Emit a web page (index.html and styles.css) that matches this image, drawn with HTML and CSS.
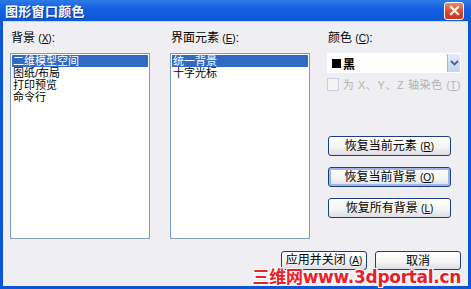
FILE: index.html
```html
<!DOCTYPE html>
<html lang="zh">

<head>
    <meta charset="UTF-8">
    <title>图形窗口颜色</title>
    <link rel="stylesheet" href="styles.css">
</head>

<body>
    <div class="win">
        <div class="titlebar">
            <span class="title">图形窗口颜色</span>
            <span class="close">
                <svg width="11" height="11" viewBox="0 0 11 11">
                    <path d="M2 2 L9 9 M9 2 L2 9" stroke="#fff" stroke-width="2.2" stroke-linecap="square" />
                </svg>
            </span>
        </div>
        <div class="body">
            <div class="cols">
                <div class="col list_col">
                    <div class="label">背景 <span class="key">(<u>X</u>)</span>:</div>
                    <div class="list">
                        <div class="item sel">二维模型空间</div>
                        <div class="item">图纸/布局</div>
                        <div class="item">打印预览</div>
                        <div class="item">命令行</div>
                    </div>
                </div>
                <div class="col list_col">
                    <div class="label">界面元素 <span class="key">(<u>E</u>)</span>:</div>
                    <div class="list">
                        <div class="item sel">统一背景</div>
                        <div class="item">十字光标</div>
                    </div>
                </div>
                <div class="col side">
                    <div class="label">颜色 <span class="key">(<u>C</u>)</span>:</div>
                    <div class="combo">
                        <span class="swatch"></span><span class="combo_text">黑</span>
                        <span class="arrow">
                            <svg width="9" height="6" viewBox="0 0 9 6">
                                <path d="M1 1 L4.5 4.5 L8 1" fill="none" stroke="#4d6185" stroke-width="1.8" />
                            </svg>
                        </span>
                    </div>
                    <div class="check">
                        <span class="box"></span>
                        <span>为 X、Y、Z 轴染色 <span class="key">(<u>T</u>)</span></span>
                    </div>
                    <div class="side_btns">
                        <button type="button" class="btn">恢复当前元素 <span class="key">(<u>R</u>)</span></button>
                        <button type="button" class="btn focus">恢复当前背景 <span class="key">(<u>O</u>)</span></button>
                        <button type="button" class="btn">恢复所有背景 <span class="key">(<u>L</u>)</span></button>
                    </div>
                </div>
            </div>
            <div class="bottom">
                <button type="button" class="btn wide">应用并关闭 <span class="key">(<u>A</u>)</span></button>
                <button type="button" class="btn wide">取消</button>
            </div>
        </div>
        <div class="mark">三维网www.3dportal.cn</div>
    </div>
</body>

</html>
```

FILE: styles.css
```css
* {
    box-sizing: border-box;
}

body {
    margin: 0;
    font-family: "Liberation Sans", "Noto Sans CJK SC", sans-serif;
    font-size: 12px;
    color: #000;
}

.win {
    position: relative;
    width: 471px;
    height: 289px;
    background-color: #0a56d4;
    padding: 0 3px 3px 3px;
    display: flex;
    flex-direction: column;
}

.titlebar {
    height: 21px;
    margin: 0 -3px;
    padding: 0 7px 0 5px;
    display: flex;
    align-items: center;
    justify-content: space-between;
    background: linear-gradient(#2f7ae8, #1560e0 40%, #0b58d8);
}

.title {
    color: #fff;
    font-weight: bold;
    font-size: 13px;
    letter-spacing: 0.3px;
    text-shadow: 1px 1px 0 #0a3a9a;
}

.close {
    width: 20px;
    height: 18px;
    border: 1px solid #fff;
    border-radius: 3px;
    background: linear-gradient(#e88a6e, #d5472b 60%, #c63a20);
    display: flex;
    align-items: center;
    justify-content: center;
}

.body {
    flex: 1;
    background-color: #efeef3;
    border-top: 1px solid #c9d6f0;
    padding: 9px 7px 0 7px;
    display: flex;
    flex-direction: column;
}

.cols {
    display: flex;
}

.col {
    display: flex;
    flex-direction: column;
}

.list_col {
    width: 141px;
    margin-right: 20px;
}

.label {
    height: 14px;
    line-height: 14px;
    margin-bottom: 8px;
    padding-left: 1px;
}

.key {
    font-size: 10px;
}

.list {
    height: 186px;
    background-color: #fff;
    border: 1px solid #7f9db9;
    padding: 1px;
}

.item {
    height: 12px;
    line-height: 12px;
    font-size: 11px;
    padding-left: 1px;
}

.sel {
    background-color: #316ac5;
    color: #fff;
}

.side {
    width: 134px;
    margin-left: -3px;
}

.combo {
    height: 20px;
    background-color: #fff;
    border: 1px solid #fff;
    display: flex;
    align-items: center;
    padding-left: 4px;
}

.swatch {
    width: 9px;
    height: 9px;
    background-color: #000;
    margin-right: 2px;
}

.combo_text {
    flex: 1;
    font-weight: bold;
}

.arrow {
    width: 13px;
    height: 18px;
    background: linear-gradient(#e4ebf9, #c3d3f4);
    border-left: 1px solid #a9b7d6;
    display: flex;
    align-items: center;
    justify-content: center;
}

.check {
    margin-top: 4px;
    display: flex;
    align-items: center;
    color: #b5b3ad;
    font-size: 11px;
    letter-spacing: 0.6px;
    height: 14px;
    white-space: nowrap;
}

.box {
    width: 13px;
    height: 13px;
    border: 1px solid #c8cfe0;
    background-color: #f4f4f4;
    margin-right: 4px;
}

.side_btns {
    margin-top: 45px;
    display: flex;
    flex-direction: column;
    gap: 11px;
    padding-left: 1px;
}

.btn {
    width: 123px;
    height: 20px;
    font-family: "Liberation Sans", "Noto Sans CJK SC", sans-serif;
    font-size: 12px;
    line-height: 16px;
    padding: 0;
    color: #000;
    border: 1px solid #1f3f78;
    border-radius: 3px;
    background: linear-gradient(#ffffff, #f4f4f2 60%, #dcdce6);
}

.btn.focus {
    box-shadow: inset 0 0 0 2px #9cb6e8;
}

.bottom {
    display: flex;
    justify-content: flex-end;
    gap: 8px;
    margin-top: 12px;
}

.wide {
    width: 86px;
    height: 19px;
}

.mark {
    position: absolute;
    right: 10px;
    bottom: 1px;
    color: #e8202a;
    font-family: "DejaVu Sans", "Noto Sans CJK SC", sans-serif;
    font-weight: bold;
    font-size: 17px;
    letter-spacing: -0.3px;
    text-shadow: 1px 0 0 #fff, -1px 0 0 #fff, 0 1px 0 #fff, 0 -1px 0 #fff, 1px 1px 0 #fff, -1px -1px 0 #fff, 1px -1px 0 #fff, -1px 1px 0 #fff;
}
```
